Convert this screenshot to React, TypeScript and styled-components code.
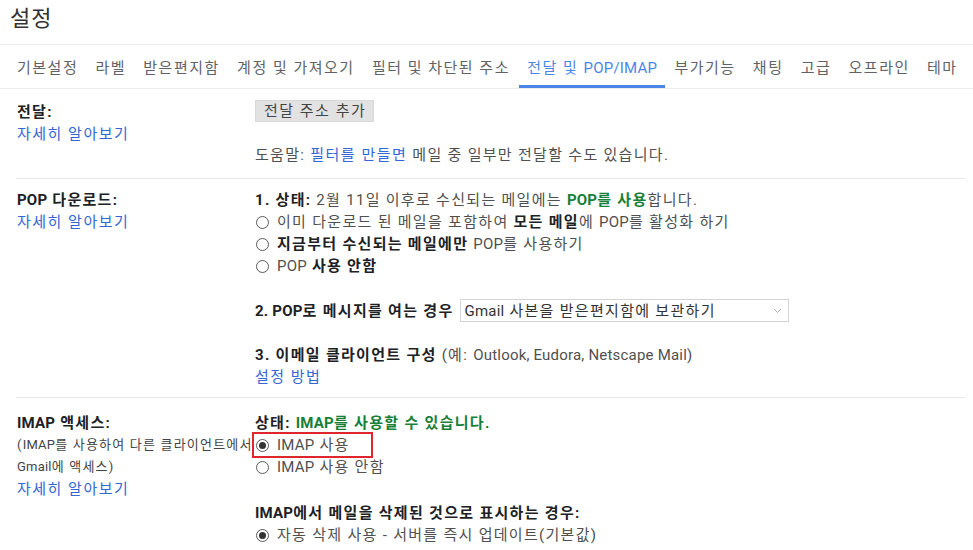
import React from "react";
import styled, { createGlobalStyle } from "styled-components";

const GlobalStyle = createGlobalStyle`
  body {
    margin: 0;
    background: #fff;
    font-family: Roboto, "Noto Sans CJK KR", sans-serif;
    font-size: 15px;
    letter-spacing: 1.3px;
    color: #505050;
  }
`;

const En = styled.span`
  letter-spacing: 0.2px;
`;

function Radio({ checked }: { checked?: boolean }) {
  return <RadioCircle $checked={checked} />;
}

function App() {
  const tabs: React.ReactNode[] = [
    "기본설정",
    "라벨",
    "받은편지함",
    "계정 및 가져오기",
    "필터 및 차단된 주소",
    <>
      {"전달 및 "}
      <En>POP/IMAP</En>
    </>,
    "부가기능",
    "채팅",
    "고급",
    "오프라인",
    "테마",
  ];

  return (
    <Page>
      <GlobalStyle />
      <Title>설정</Title>
      <TabBar>
        {tabs.map((t, i) => (
          <Tab key={i} $active={i === 5}>
            <span>{t}</span>
          </Tab>
        ))}
      </TabBar>
      <Settings>
        <Section $top={12} $bottom={12}>
          <LabelCol>
            <Heading>전달:</Heading>
            <Link>자세히 알아보기</Link>
          </LabelCol>
          <ValueCol>
            <GrayButton>전달 주소 추가</GrayButton>
            <Line $gap={22}>
              도움말: <Link>필터를 만들면</Link> 메일 중 일부만 전달할 수도
              있습니다.
            </Line>
          </ValueCol>
        </Section>

        <Section $top={10} $bottom={9}>
          <LabelCol>
            <Heading>
              <En>POP</En> 다운로드:
            </Heading>
            <Link>자세히 알아보기</Link>
          </LabelCol>
          <ValueCol>
            <Line>
              <b>1. 상태:</b> 2월 11일 이후로 수신되는 메일에는{" "}
              <Green>
                <En>POP</En>를 사용
              </Green>
              합니다.
            </Line>
            <Option>
              <Radio />
              <span>
                이미 다운로드 된 메일을 포함하여 <b>모든 메일</b>에{" "}
                <En>POP</En>를 활성화 하기
              </span>
            </Option>
            <Option>
              <Radio />
              <span>
                <b>지금부터 수신되는 메일에만</b> <En>POP</En>를 사용하기
              </span>
            </Option>
            <Option>
              <Radio />
              <span>
                <En>POP</En> <b>사용 안함</b>
              </span>
            </Option>
            <SelectRow>
              <b>
                <En>2. POP</En>로 메시지를 여는 경우
              </b>
              <SelectBox>
                <span>
                  <En>Gmail</En> 사본을 받은편지함에 보관하기
                </span>
                <svg width="9" height="6" viewBox="0 0 9 6">
                  <path d="M1 1l3.5 3.5L8 1" fill="none" stroke="#aaa" strokeWidth="1" />
                </svg>
              </SelectBox>
            </SelectRow>
            <Line $gap={22}>
              <b>3. 이메일 클라이언트 구성</b> (예:{" "}
              <En>Outlook, Eudora, Netscape Mail)</En>
            </Line>
            <Line>
              <Link>설정 방법</Link>
            </Line>
          </ValueCol>
        </Section>

        <Section $top={14} $bottom={0} $last>
          <LabelCol>
            <Heading>
              <En>IMAP</En> 액세스:
            </Heading>
            <SmallNote>
              (<En>IMAP</En>를 사용하여 다른 클라이언트에서
            </SmallNote>
            <SmallNote>
              <En>Gmail</En>에 액세스)
            </SmallNote>
            <Link>자세히 알아보기</Link>
          </LabelCol>
          <ValueCol>
            <Line>
              <b>상태:</b>{" "}
              <Green>
                <En>IMAP</En>를 사용할 수 있습니다.
              </Green>
            </Line>
            <Highlight>
              <Option>
                <Radio checked />
                <span>
                  <En>IMAP</En> 사용
                </span>
              </Option>
            </Highlight>
            <Option>
              <Radio />
              <span>
                <En>IMAP</En> 사용 안함
              </span>
            </Option>
            <Line $gap={24}>
              <b>
                <En>IMAP</En>에서 메일을 삭제된 것으로 표시하는 경우:
              </b>
            </Line>
            <Option>
              <Radio checked />
              <span>자동 삭제 사용 - 서버를 즉시 업데이트(기본값)</span>
            </Option>
          </ValueCol>
        </Section>
      </Settings>
    </Page>
  );
}

export default App;

const Page = styled.div`
  width: 973px;
  height: 550px;
  overflow: hidden;
  b {
    font-weight: 700;
    color: #202124;
  }
`;

const Title = styled.div`
  height: 44px;
  line-height: 38px;
  padding-left: 10px;
  font-size: 22px;
  letter-spacing: 1px;
  color: #333;
`;

const TabBar = styled.div`
  display: flex;
  gap: 1.25px;
  height: 45px;
  box-sizing: border-box;
  padding-left: 9px;
  border-top: 1px solid #ebebeb;
  border-bottom: 1px solid #ebebeb;
`;

const Tab = styled.div<{ $active?: boolean }>`
  display: flex;
  align-items: center;
  padding: 3px 8px 0;
  white-space: nowrap;
  font-size: 15px;
  letter-spacing: 1.5px;
  color: ${(p) => (p.$active ? "#4a86e8" : "#5f6368")};
  border-bottom: 3px solid ${(p) => (p.$active ? "#4a86e8" : "transparent")};
`;

const Settings = styled.div`
  padding: 0 8px 0 16px;
`;

const Section = styled.div<{ $top: number; $bottom: number; $last?: boolean }>`
  display: grid;
  grid-template-columns: 239px 1fr;
  padding: ${(p) => p.$top}px 0 ${(p) => p.$bottom}px;
  border-bottom: ${(p) => (p.$last ? "none" : "1px solid #e8e8e8")};
  line-height: 22px;
`;

const LabelCol = styled.div`
  display: flex;
  flex-direction: column;
  padding-left: 1px;
  white-space: nowrap;
`;

const ValueCol = styled.div`
  display: flex;
  flex-direction: column;
  align-items: flex-start;
`;

const Heading = styled.div`
  font-weight: 700;
  color: #202124;
`;

const Link = styled.span`
  color: #3367d6;
  letter-spacing: 1.5px;
  cursor: pointer;
`;

const SmallNote = styled.div`
  font-size: 13px;
  letter-spacing: 1.2px;
  color: #444;
`;

const Green = styled.b`
  && {
    color: #188038;
  }
`;

const Line = styled.div<{ $gap?: number }>`
  margin-top: ${(p) => p.$gap ?? 0}px;
  white-space: nowrap;
`;

const GrayButton = styled.div`
  margin-top: -1px;
  height: 22px;
  line-height: 21px;
  box-sizing: border-box;
  padding: 0 7px 0 8px;
  background: #e2e2e2;
  border: 1px solid #d9d9d9;
  letter-spacing: 1.5px;
  color: #444;
`;

const Option = styled.div`
  display: flex;
  align-items: center;
  white-space: nowrap;
`;

const RadioCircle = styled.span<{ $checked?: boolean }>`
  position: relative;
  width: 13px;
  height: 13px;
  margin: 0 8px 0 1px;
  box-sizing: border-box;
  border: 1px solid #5a5a5a;
  border-radius: 50%;
  flex-shrink: 0;
  &::after {
    content: "";
    display: ${(p) => (p.$checked ? "block" : "none")};
    position: absolute;
    left: 2px;
    top: 2px;
    width: 7px;
    height: 7px;
    border-radius: 50%;
    background: #333;
  }
`;

const Highlight = styled.div`
  width: 116px;
  margin-left: -1px;
  padding-left: 1px;
  outline: 2px solid #e0262d;
  outline-offset: 0;
`;

const SelectRow = styled.div`
  display: flex;
  align-items: center;
  gap: 6px;
  margin-top: 22px;
  height: 23px;
  white-space: nowrap;
`;

const SelectBox = styled.div`
  display: flex;
  align-items: center;
  justify-content: space-between;
  width: 329px;
  height: 23px;
  box-sizing: border-box;
  padding: 0 6px 0 4px;
  border: 1px solid #d4d4d4;
  color: #333;
`;
